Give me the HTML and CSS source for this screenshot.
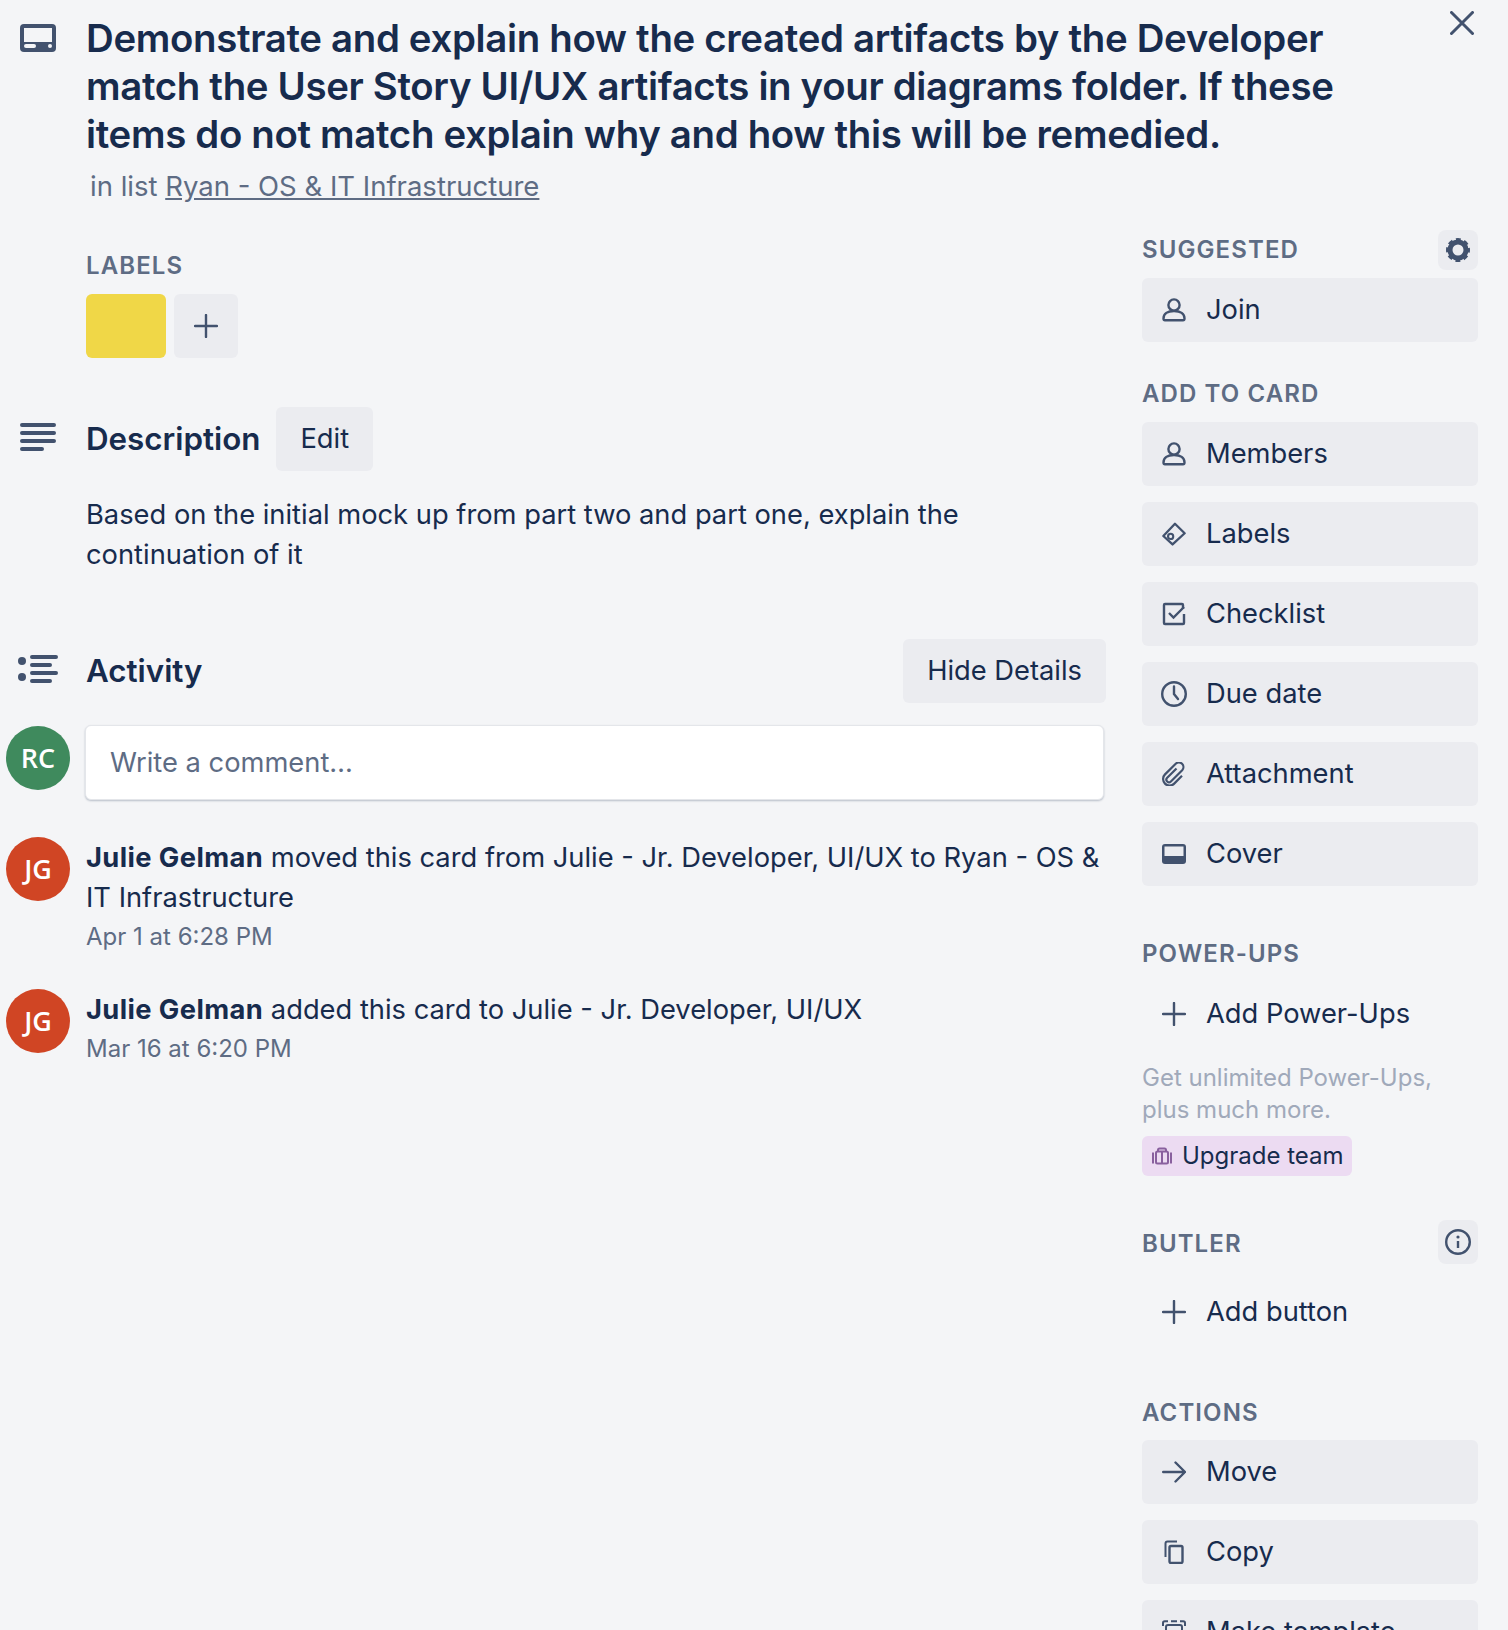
FILE: index.html
```html
<!DOCTYPE html>
<html lang="en">
<head>
<meta charset="utf-8">
<title>Card</title>
<link rel="stylesheet" href="styles.css">
</head>
<body>
<svg class="defs" width="0" height="0" aria-hidden="true">
  <symbol id="i-person" viewBox="0 0 24 24"><circle cx="12" cy="7" r="5.6" fill="none" stroke="currentColor" stroke-width="2.4"/><path d="M1.500 20.500c0-4.500 4-7.500 10.500-7.500s10.500 3 10.500 7.500c0 1-.7 1.700-1.500 1.700H3c-.8 0-1.500-.7-1.500-1.700z" fill="none" stroke="currentColor" stroke-width="2.400"/></symbol>
  <symbol id="i-plus" viewBox="0 0 24 24"><path d="M12 1v22M1 12h22" fill="none" stroke="currentColor" stroke-width="2.400" stroke-linecap="round"/></symbol>
</svg>
<div class="card">
  <main class="main">
    <header class="title-row">
      <svg class="gutter-icon icon-card" viewBox="0 0 36 28"><rect width="36" height="28" rx="4" fill="currentColor"/><rect x="4" y="4" width="28" height="14" fill="#f4f5f7"/><rect x="4" y="20" width="12" height="4" rx="2" fill="#f4f5f7"/><circle cx="30" cy="22" r="2" fill="#f4f5f7"/></svg>
      <div>
        <h1 class="title">Demonstrate and explain how the created artifacts by the Developer match the User Story UI/UX artifacts in your diagrams folder. If these items do not match explain why and how this will be remedied.</h1>
        <p class="in-list">in list <a class="list-link" href="#">Ryan - OS &amp; IT Infrastructure</a></p>
      </div>
    </header>

    <section class="labels">
      <h3 class="caps">Labels</h3>
      <div class="label-row">
        <span class="chip"></span>
        <span class="chip-add"><svg class="icon-24"><use href="#i-plus"/></svg></span>
      </div>
    </section>

    <section class="description">
      <div class="desc-head">
        <svg class="gutter-icon icon-desc" viewBox="0 0 36 28"><path d="M2 2h32M2 10h32M2 18h32M2 26h20" fill="none" stroke="currentColor" stroke-width="4" stroke-linecap="round"/></svg>
        <h2 class="heading">Description</h2>
        <button class="btn edit-btn">Edit</button>
      </div>
      <p class="desc-text">Based on the initial mock up from part two and part one, explain the continuation of it</p>
    </section>

    <section class="activity">
      <div class="act-head">
        <svg class="gutter-icon icon-act" viewBox="0 0 40 28"><circle cx="4" cy="6" r="4" fill="currentColor"/><circle cx="4" cy="22" r="4" fill="currentColor"/><path d="M14 2h24M14 10h18M14 18h24M14 26h18" fill="none" stroke="currentColor" stroke-width="4" stroke-linecap="round"/></svg>
        <h2 class="heading">Activity</h2>
        <button class="btn hide-btn">Hide Details</button>
      </div>
      <div class="comment-row">
        <span class="avatar avatar-green">RC</span>
        <div class="comment-box">Write a comment…</div>
      </div>
      <div class="entry entry-first">
        <span class="avatar avatar-red">JG</span>
        <div class="entry-body">
          <p class="entry-text"><strong>Julie Gelman</strong> moved this card from Julie - Jr. Developer, UI/UX to Ryan - OS &amp; IT Infrastructure</p>
          <p class="entry-date">Apr 1 at 6:28 PM</p>
        </div>
      </div>
      <div class="entry">
        <span class="avatar avatar-red">JG</span>
        <div class="entry-body">
          <p class="entry-text"><strong>Julie Gelman</strong> added this card to Julie - Jr. Developer, UI/UX</p>
          <p class="entry-date">Mar 16 at 6:20 PM</p>
        </div>
      </div>
    </section>
  </main>

  <aside class="side">
    <button class="close" aria-label="Close"><svg viewBox="0 0 24 24"><path d="M1.500 1.500l21 21M22.500 1.500l-21 21" fill="none" stroke="currentColor" stroke-width="3" stroke-linecap="round"/></svg></button>

    <div class="side-head side-head-suggested">
      <h3 class="caps">Suggested</h3>
      <span class="mini-btn mini-gear"><svg class="icon-24" viewBox="0 0 24 24"><circle cx="12" cy="12" r="8" fill="none" stroke="currentColor" stroke-width="5"/><circle cx="12" cy="12" r="10.300" fill="none" stroke="currentColor" stroke-width="3.400" stroke-dasharray="4.700 3.390" stroke-dashoffset="2.350"/></svg></span>
    </div>
    <button class="btn side-btn"><svg class="icon-24"><use href="#i-person"/></svg>Join</button>

    <h3 class="caps side-title title-add">Add to card</h3>
    <div class="btn-stack">
      <button class="btn side-btn"><svg class="icon-24"><use href="#i-person"/></svg>Members</button>
      <button class="btn side-btn"><svg class="icon-24" viewBox="0 0 25 25"><path d="M13.500 1.800L23.600 11.700 11 23.400 1.400 14.600z" fill="none" stroke="currentColor" stroke-width="2.400" stroke-linejoin="round"/><circle cx="9" cy="15" r="2.700" fill="none" stroke="currentColor" stroke-width="2.200"/></svg>Labels</button>
      <button class="btn side-btn"><svg class="icon-24" viewBox="0 0 24 24"><path d="M21 7V3a1 1 0 0 0-1-1H3a1 1 0 0 0-1 1v18a1 1 0 0 0 1 1h18a1 1 0 0 0 1-1v-9" fill="none" stroke="currentColor" stroke-width="2.400"/><path d="M7 11l4.500 4.500L22 5" fill="none" stroke="currentColor" stroke-width="2.400"/></svg>Checklist</button>
      <button class="btn side-btn"><svg class="icon-26" viewBox="0 0 26 26"><circle cx="13" cy="13" r="11.800" fill="none" stroke="currentColor" stroke-width="2.400"/><path d="M13 5.500V13l4 5" fill="none" stroke="currentColor" stroke-width="2.400" stroke-linecap="round"/></svg>Due date</button>
      <button class="btn side-btn"><svg class="icon-24" viewBox="0 0 24 24"><path d="M14.500 6.500L5.200 15.800a2.600 2.600 0 0 0 3.700 3.700L20.200 8.200A4.600 4.600 0 0 0 13.700 1.700L3 12.400a6.500 6.500 0 0 0 9.200 9.200L20 13.800" fill="none" stroke="currentColor" stroke-width="2.200"/></svg>Attachment</button>
      <button class="btn side-btn"><svg class="icon-24" viewBox="0 0 24 20"><rect width="24" height="20" rx="3" fill="currentColor"/><rect x="2.500" y="2.500" width="19" height="9.500" fill="#ebecf0"/></svg>Cover</button>
    </div>

    <h3 class="caps side-title title-power">Power-Ups</h3>
    <button class="btn side-btn btn-plain"><svg class="icon-24"><use href="#i-plus"/></svg>Add Power-Ups</button>
    <p class="promo">Get unlimited Power-Ups, plus much more.</p>
    <span class="upgrade"><svg class="icon-upgrade" viewBox="0 0 20 18"><path d="M6 4V2.500C6 1.700 6.700 1 7.500 1h5c.8 0 1.500.7 1.500 1.500V4M5.500 4h9c.8 0 1.500.7 1.500 1.500v9c0 .8-.7 1.500-1.500 1.500h-9C4.700 16 4 15.300 4 14.500v-9C4 4.700 4.700 4 5.500 4zM10 4v12M1 5v11M19 5v11" transform="translate(0 .5)" fill="none" stroke="currentColor" stroke-width="2"/></svg>Upgrade team</span>

    <div class="side-head side-head-butler">
      <h3 class="caps caps-low">Butler</h3>
      <span class="mini-btn mini-info"><svg class="icon-26" viewBox="0 0 26 26"><circle cx="13" cy="13" r="11.800" fill="none" stroke="currentColor" stroke-width="2.400"/><path d="M13 12v7" stroke="currentColor" stroke-width="2.400" fill="none"/><circle cx="13" cy="8" r="1.600" fill="currentColor"/></svg></span>
    </div>
    <button class="btn side-btn btn-plain"><svg class="icon-24"><use href="#i-plus"/></svg>Add button</button>

    <h3 class="caps side-title title-actions">Actions</h3>
    <div class="btn-stack">
      <button class="btn side-btn"><svg class="icon-24" viewBox="0 0 24 24"><path d="M1.200 12h21.600M13.500 2.500L23 12l-9.500 9.500" fill="none" stroke="currentColor" stroke-width="2.400" stroke-linecap="round" stroke-linejoin="round"/></svg>Move</button>
      <button class="btn side-btn"><svg class="icon-24" viewBox="0 0 24 24"><path d="M3.500 17V3.500C3.500 2.400 4.400 1.500 5.500 1.500H15" fill="none" stroke="currentColor" stroke-width="2"/><rect x="7.500" y="6" width="13" height="17" rx="1.500" fill="none" stroke="currentColor" stroke-width="2.400"/></svg>Copy</button>
      <button class="btn side-btn"><svg class="icon-24" viewBox="0 0 24 24"><path d="M1 6V3c0-1 .8-1.800 1.800-1.800H6M9 1.200h6M18 1.200h3.200C22.200 1.200 23 2 23 3v3" fill="none" stroke="currentColor" stroke-width="2"/><rect x="4" y="5" width="16" height="16" rx="2" fill="none" stroke="currentColor" stroke-width="2"/></svg>Make template</button>
    </div>
  </aside>
</div>
</body>
</html>
```

FILE: styles.css
```css
* { box-sizing: border-box; }
html, body { margin: 0; height: 1630px; overflow: hidden; }
body { background: #f4f5f7; color: #172b4d; font-family: Inter, "Liberation Sans", sans-serif; font-size: 27.3px; line-height: 40px; }
.defs { display: block; height: 0; }
h1, h2, h3, p { margin: 0; }
.card { display: flex; height: 1630px; }
.main { width: 1142px; flex: none; padding: 14px 36px 0 0; position: relative; }
.side { width: 336px; flex: none; position: relative; padding-top: 230px; }

.gutter-icon { display: block; flex: none; color: #42526e; }
.title-row { display: flex; }
.icon-card { width: 36px; height: 28px; margin: 10px 30px 0 20px; }
.title { font-size: 38.4px; line-height: 48px; font-weight: 600; width: 1300px; letter-spacing: -0.33px; }
.in-list { margin: 8px 0 0 4px; color: #5e6c84; font-size: 27.5px; }
.list-link { color: #5e6c84; text-decoration: underline; }

.caps { font-size: 24px; line-height: 32px; font-weight: 600; letter-spacing: 1.1px; text-transform: uppercase; color: #5e6c84; }
.labels { margin: 44px 0 0 86px; }
.label-row { display: flex; gap: 8px; margin-top: 12px; }
.chip { width: 80px; height: 64px; border-radius: 6px; background: #f0d747; }
.chip-add { width: 64px; height: 64px; border-radius: 6px; background: #ebecf0; display: flex; align-items: center; justify-content: center; color: #42526e; }

.icon-24 { width: 24px; height: 24px; flex: none; }
.icon-26 { width: 26px; height: 26px; flex: none; }

.btn { display: inline-flex; align-items: center; border: 0; border-radius: 6px; background: #ebecf0; color: #172b4d; font: inherit; height: 64px; padding: 0 24px; }
.heading { font-size: 31.3px; line-height: 40px; font-weight: 600; }

.description { margin-top: 49px; }
.desc-head { display: flex; align-items: center; }
.icon-desc { width: 36px; height: 28px; margin: -4px 30px 0 20px; }
.edit-btn { margin-left: 16px; }
.desc-text { margin: 24px 0 0 86px; max-width: 930px; }

.activity { margin-top: 64px; }
.act-head { display: flex; align-items: center; }
.icon-act { width: 40px; height: 28px; margin: -4px 28px 0 18px; }
.hide-btn { margin-left: auto; }
.comment-row { display: flex; align-items: flex-start; margin-top: 23px; }
.avatar { width: 64px; height: 64px; flex: none; border-radius: 50%; margin-left: 6px; display: flex; align-items: center; justify-content: center; color: #fff; font-family: "Open Sans", sans-serif; font-size: 27px; font-weight: 600; }
.avatar-green { background: #3f8a5d; }
.avatar-red { background: #d04524; }
.comment-box { flex: 1; margin: -1px 2px 0 15px; height: 75px; background: #fff; border: 1px solid #e4e6ea; border-radius: 6px; box-shadow: 0 1px 2px rgba(9, 30, 66, .25); padding: 0 24px; display: flex; align-items: center; color: #5e6c84; }
.entry { display: flex; align-items: flex-start; gap: 16px; margin-top: 32px; }
.entry-first { margin-top: 37px; }
.entry-body { flex: 1; margin-top: 1px; }
.entry-text strong { font-weight: 700; letter-spacing: 0.4px; }
.entry-date { font-size: 24px; line-height: 40px; color: #5e6c84; margin-top: -1px; }

.close { position: absolute; top: 11px; right: 4px; width: 24px; height: 24px; padding: 0; border: 0; background: none; color: #42526e; }
.close svg { display: block; width: 24px; height: 24px; }
.side-head { display: flex; align-items: center; justify-content: space-between; }
.mini-btn { display: flex; align-items: center; justify-content: center; width: 40px; border-radius: 8px; background: #ebecf0; color: #42526e; }
.mini-gear { height: 40px; }
.mini-info { height: 44px; background: #ebecf0; }
.caps-low { padding-top: 4px; }
.side-btn { display: flex; width: 100%; gap: 20px; padding-left: 20px; text-align: left; }
.side-btn svg { color: #42526e; }
.side-btn .icon-26 { margin: 0 -1px; }
.btn-plain { background: none; }
.btn-stack { display: flex; flex-direction: column; gap: 16px; }
.side-head-suggested { margin-bottom: 8px; }
.side-title { margin-bottom: 12px; }
.title-add { margin-top: 36px; }
.title-power { margin-top: 52px; margin-bottom: 12px; }
.promo { font-size: 24px; line-height: 32px; color: #a0a9ba; margin-top: 16px; }
.upgrade { display: inline-flex; align-items: center; gap: 10px; height: 40px; padding: 0 8px 0 10px; margin-top: 10px; border-radius: 6px; background: #ecdbf2; font-size: 24px; }
.icon-upgrade { width: 20px; height: 18px; color: #89609e; }
.side-head-butler { margin-top: 44px; margin-bottom: 16px; }
.title-actions { margin-top: 53px; margin-bottom: 11px; }
```
